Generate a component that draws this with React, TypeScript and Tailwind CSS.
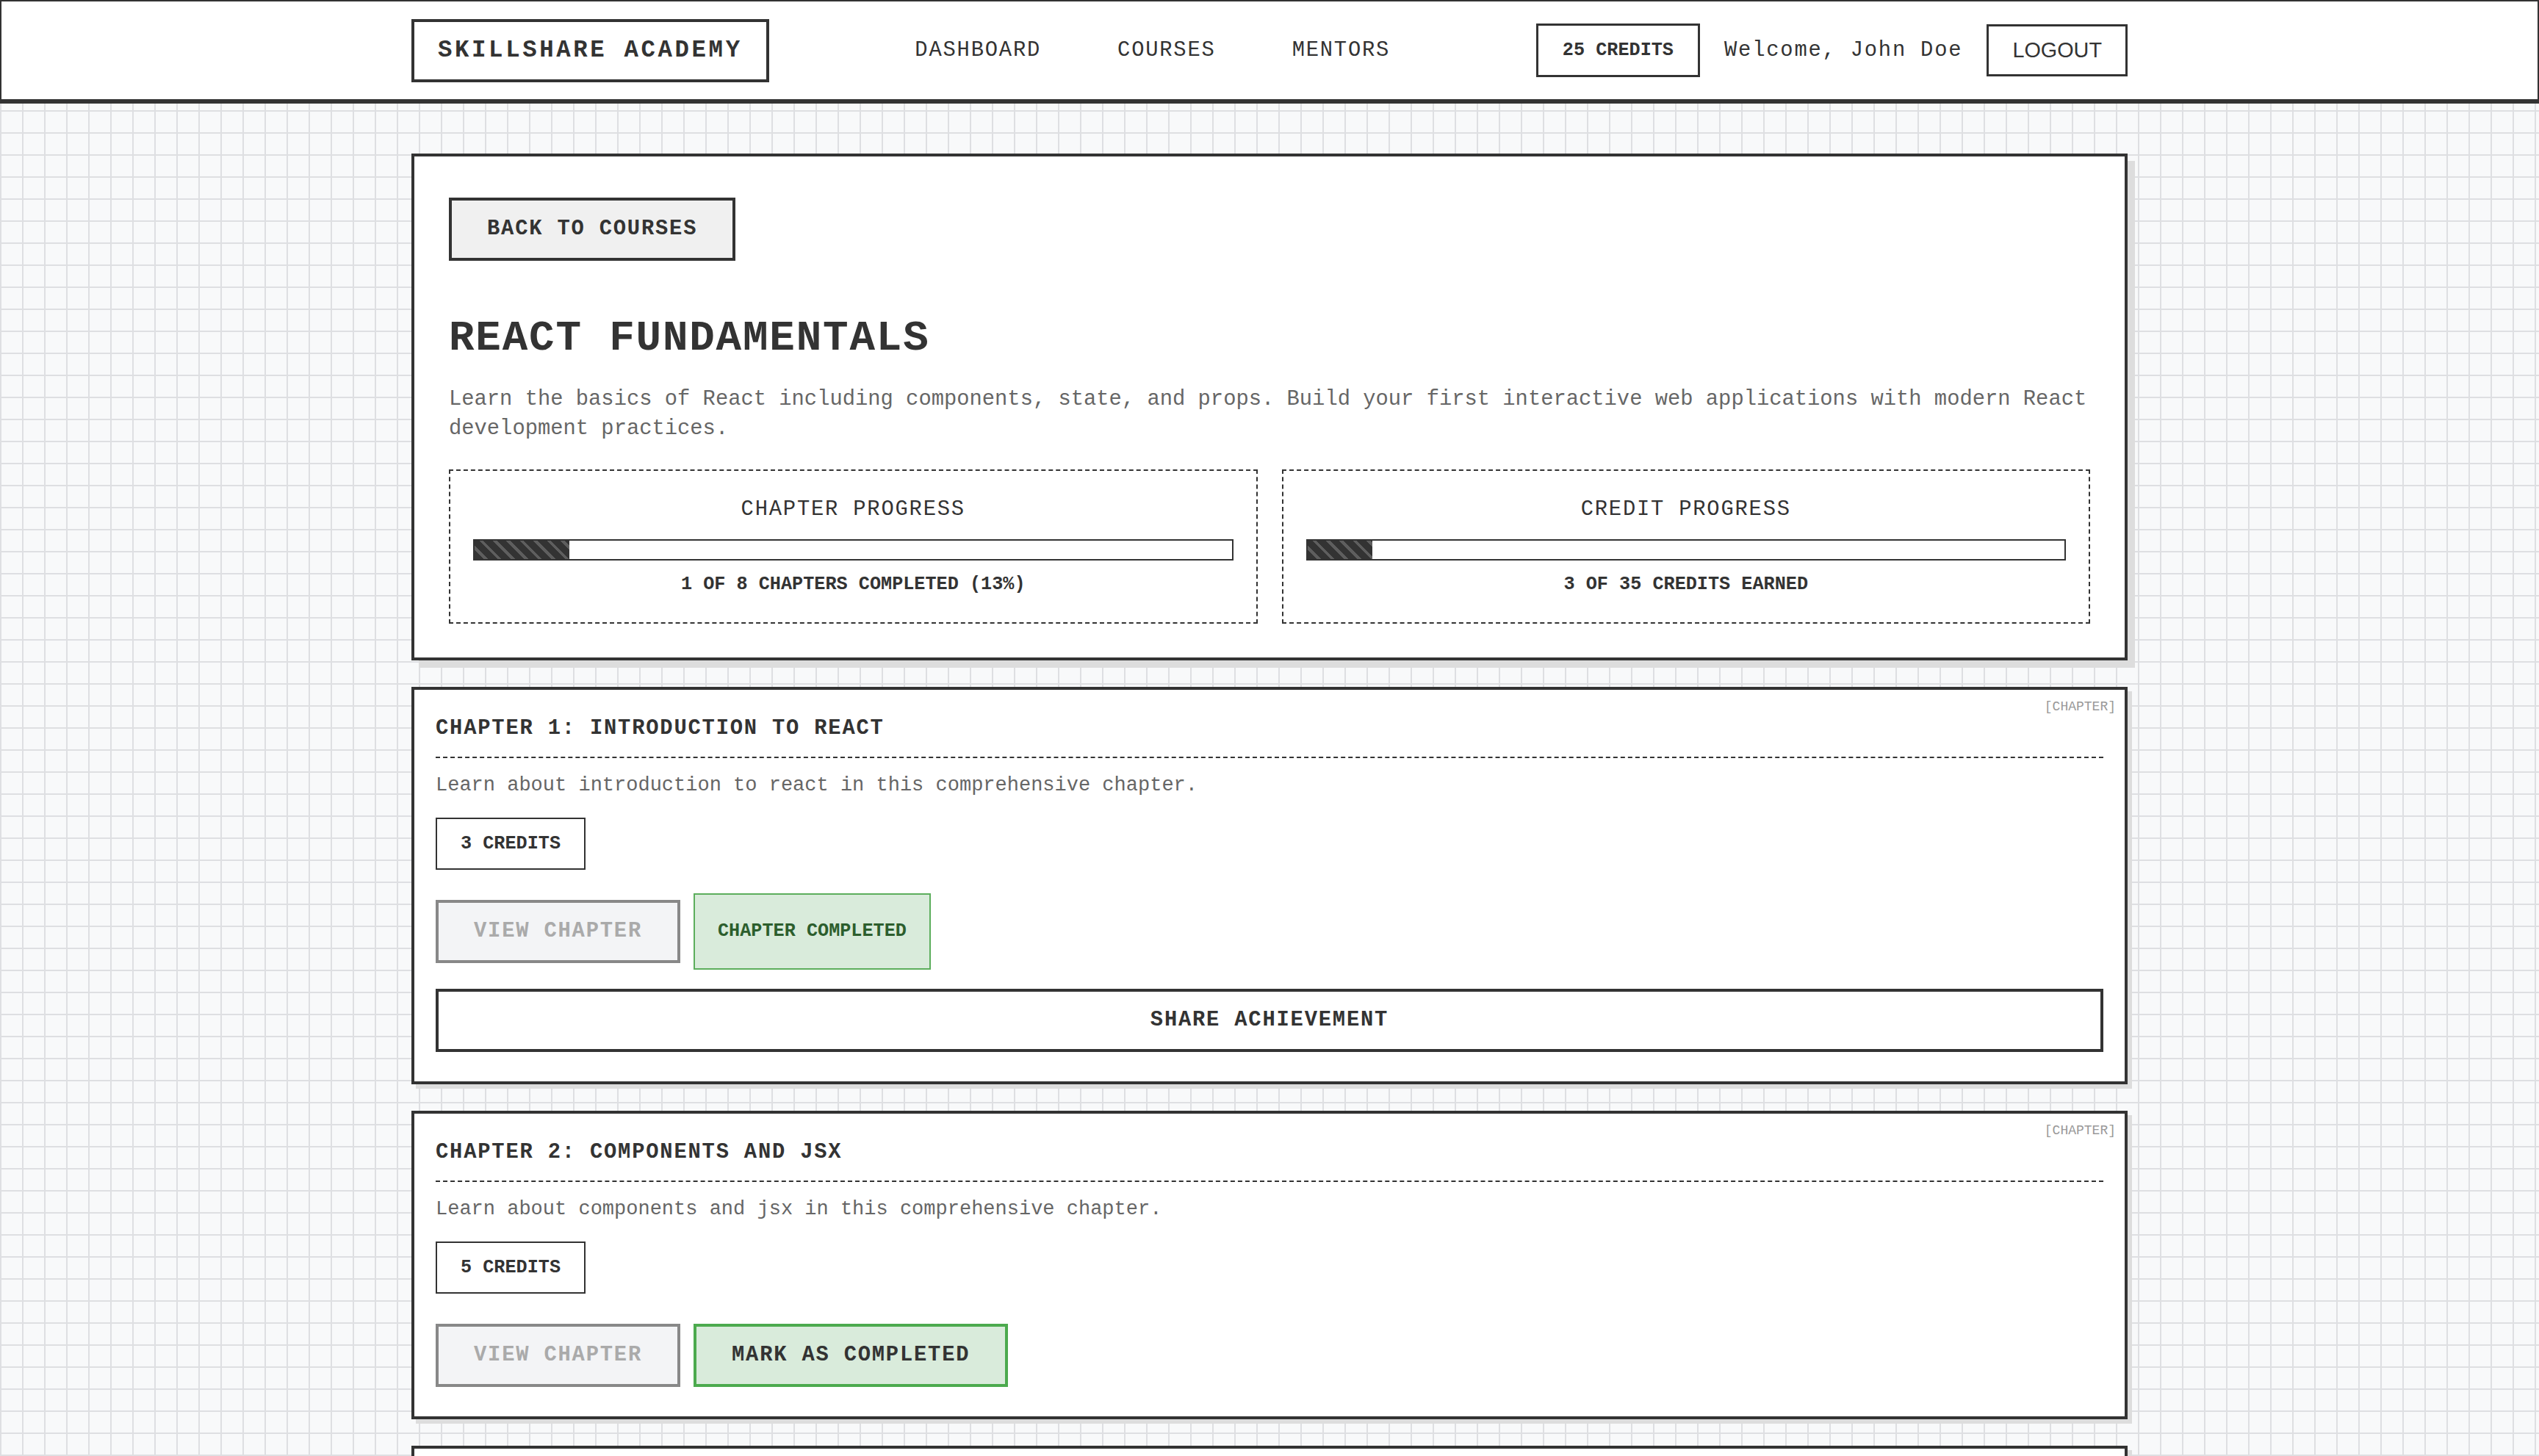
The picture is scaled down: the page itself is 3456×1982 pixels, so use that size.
import React from 'react'

type Chapter = { id: number; title: string; credits: number; completed: boolean }

const CHAPTERS: Chapter[] = [
  { id: 1, title: 'Introduction to React', credits: 3, completed: true },
  { id: 2, title: 'Components and JSX', credits: 5, completed: false },
  { id: 3, title: 'State and Props', credits: 4, completed: false },
  { id: 4, title: 'Handling Events', credits: 5, completed: false },
  { id: 5, title: 'Conditional Rendering', credits: 4, completed: false },
  { id: 6, title: 'Lists and Keys', credits: 5, completed: false },
  { id: 7, title: 'Forms', credits: 4, completed: false },
  { id: 8, title: 'Hooks', credits: 5, completed: false },
]

function ProgressBox({ label, pct, caption }: { label: string; pct: number; caption: string }) {
  return (
    <div className="border-2 border-dashed border-[#333] px-[31px] pt-[33px] pb-[34px] text-center">
      <div className="text-[28.8px] leading-[40px] tracking-[1.8px]">{label}</div>
      <div className="mt-[20px] h-[29px] border-2 border-[#333] bg-white">
        <div
          className="h-full bg-[repeating-linear-gradient(45deg,#333_0px,#333_9px,#5e5e5e_9px,#5e5e5e_13px)]"
          style={{ width: `${pct}%` }}
        />
      </div>
      <div className="mt-[15px] text-[25.2px] leading-[35px] font-bold">{caption}</div>
    </div>
  )
}

function ChapterCard({ ch }: { ch: Chapter }) {
  return (
    <div className="relative mt-[36px] bg-white border-4 border-[#333] shadow-[6px_6px_0_#ddd] px-[29px] pt-[35px] pb-[40px]">
      <span className="absolute top-[12px] right-[12px] text-[18px] leading-[22px] text-[#999]">[CHAPTER]</span>
      <h3 className="uppercase text-[28.8px] leading-[35px] font-bold tracking-[1.8px] pb-[21px] border-b-2 border-dashed border-[#333]">
        Chapter {ch.id}: {ch.title}
      </h3>
      <p className="mt-[18px] text-[27px] leading-[38px] text-[#666]">
        Learn about {ch.title.toLowerCase()} in this comprehensive chapter.
      </p>
      <div className="mt-[25px] w-fit border-2 border-[#333] bg-white px-[32px] py-[16px] text-[25.2px] leading-[35px] font-bold">
        {ch.credits} CREDITS
      </div>
      <div className="mt-[41px] h-[86px] flex items-center gap-[18px]">
        <button className="border-4 border-[#888] bg-[#f3f4f6] text-[#aaa] px-[48px] py-[21px] text-[28.8px] leading-[36px] font-bold tracking-[1.8px]">
          VIEW CHAPTER
        </button>
        {ch.completed ? (
          <div className="border-2 border-[#5cae5c] bg-[#d9ebdb] text-[#2c5e2d] px-[31px] py-[32px] text-[25.2px] leading-[36px] font-bold">
            CHAPTER COMPLETED
          </div>
        ) : (
          <button className="border-4 border-[#4caa4e] bg-[#d9ebdb] text-[#333] px-[48px] py-[21px] text-[28.8px] leading-[36px] font-bold tracking-[1.8px]">
            MARK AS COMPLETED
          </button>
        )}
      </div>
      {ch.completed && (
        <button className="mt-[35px] w-full border-4 border-[#333] bg-white py-[21px] text-[28.8px] leading-[36px] font-bold tracking-[1.8px]">
          SHARE ACHIEVEMENT
        </button>
      )}
    </div>
  )
}

export default function App() {
  const done = CHAPTERS.filter(c => c.completed)
  const totalCredits = CHAPTERS.reduce((s, c) => s + c.credits, 0)
  const earned = done.reduce((s, c) => s + c.credits, 0)
  const chapterPct = (done.length / CHAPTERS.length) * 100
  const creditPct = (earned / totalCredits) * 100

  return (
    <div className="min-h-screen bg-[#f8f9fa] bg-[linear-gradient(to_right,#dedfe2_2px,transparent_2px),linear-gradient(to_bottom,#dedfe2_2px,transparent_2px)] bg-[size:30px_30px] text-[#333] font-['Liberation_Mono','Courier_New',monospace]">
      <header className="bg-white border-2 border-b-[6px] border-[#333]">
        <div className="w-[2336px] mx-auto h-[133px] flex items-center justify-between">
          <div className="border-4 border-[#333] px-[32px] py-[19px] text-[32.4px] leading-[40px] font-bold tracking-[3.6px]">
            SKILLSHARE ACADEMY
          </div>
          <nav className="flex items-center gap-[104px] text-[28.8px] leading-[40px] tracking-[1.8px]">
            <a>DASHBOARD</a>
            <a>COURSES</a>
            <a>MENTORS</a>
          </nav>
          <div className="flex items-center gap-[33px]">
            <div className="border-[3px] border-[#333] px-[33px] py-[16px] text-[25.2px] leading-[35px] font-bold">
              25 CREDITS
            </div>
            <span className="text-[28.8px] leading-[40px] tracking-[1.8px]">Welcome, John Doe</span>
            <button className="border-[3px] border-[#333] bg-white px-[32px] py-[16px] text-[28.8px] leading-[33px] font-['Liberation_Sans',Arial,sans-serif]">
              LOGOUT
            </button>
          </div>
        </div>
      </header>

      <main className="w-[2336px] mx-auto pt-[68px] pb-[60px]">
        <section className="bg-white border-4 border-[#333] shadow-[10px_10px_0_#ddd] px-[47px] pt-[56px] pb-[46px]">
          <button className="block bg-[#f0f0f0] border-4 border-[#333] px-[48px] py-[21px] text-[28.8px] leading-[36px] font-bold tracking-[1.8px]">
            BACK TO COURSES
          </button>
          <h1 className="mt-[71px] text-[57.6px] leading-[69px] font-bold tracking-[1.8px]">REACT FUNDAMENTALS</h1>
          <p className="mt-[29px] text-[28.8px] leading-[40px] text-[#666]">
            Learn the basics of React including components, state, and props. Build your first interactive web applications with modern React development practices.
          </p>
          <div className="mt-[35px] grid grid-cols-2 gap-[33px]">
            <ProgressBox
              label="CHAPTER PROGRESS"
              pct={chapterPct}
              caption={`${done.length} OF ${CHAPTERS.length} CHAPTERS COMPLETED (${Math.round(chapterPct)}%)`}
            />
            <ProgressBox
              label="CREDIT PROGRESS"
              pct={creditPct}
              caption={`${earned} OF ${totalCredits} CREDITS EARNED`}
            />
          </div>
        </section>

        {CHAPTERS.map(ch => (
          <ChapterCard key={ch.id} ch={ch} />
        ))}
      </main>
    </div>
  )
}
